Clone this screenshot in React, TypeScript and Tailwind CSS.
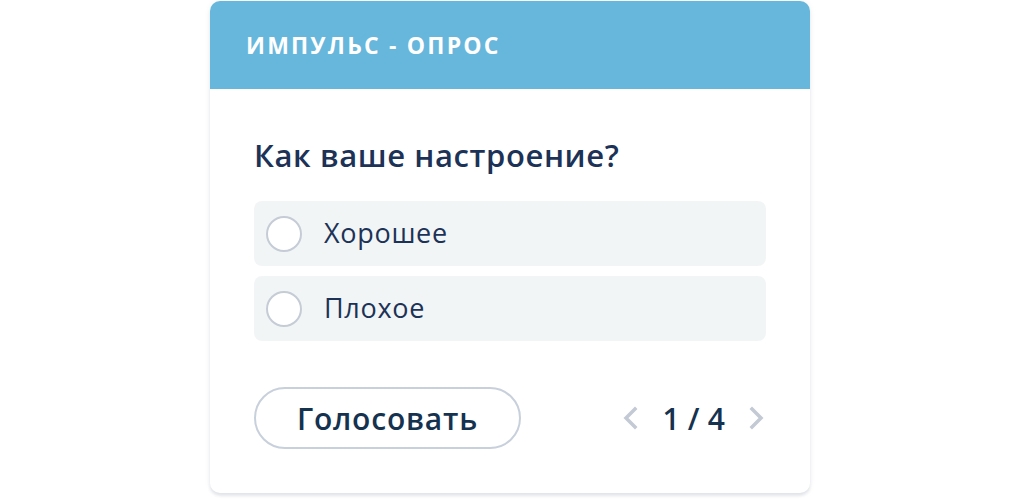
import { useState } from 'react';

const options = ['Хорошее', 'Плохое'];

export default function App() {
  const [selected, setSelected] = useState<number | null>(null);

  return (
    <div className="w-[1020px] h-[499px] bg-white font-['Open_Sans',sans-serif] overflow-hidden">
      <div className="ml-[210px] mt-[1px] w-[600px] h-[492px] bg-white rounded-[10px] overflow-hidden shadow-[0_3px_3px_rgba(30,45,80,0.10),0_0_6px_rgba(30,45,80,0.06)] flex flex-col">
        {/* шапка */}
        <div className="h-[88px] bg-[#67b6dc] flex items-center px-9">
          <span className="text-[23px] font-bold text-white tracking-[2.2px] uppercase">Импульс - опрос</span>
        </div>

        <div className="px-11 pt-[46px]">
          <h2 className="text-[31px] leading-[40px] font-semibold tracking-[0.6px] text-[#1c3256]">Как ваше настроение?</h2>

          <ul className="mt-[26px] space-y-[10px]">
            {options.map((o, i) => (
              <li key={o}>
                <button
                  type="button"
                  onClick={() => setSelected(i)}
                  className="w-full h-[65px] rounded-[8px] bg-[#f2f5f6] flex items-center px-[12px] gap-[22px] text-left"
                >
                  <span className="w-[36px] h-[36px] rounded-full border-2 border-[#c5ccd6] bg-white flex items-center justify-center">
                    {selected === i && <span className="w-[18px] h-[18px] rounded-full bg-[#67b6dc]" />}
                  </span>
                  <span className="text-[27px] tracking-[0.7px] text-[#1c3256]">{o}</span>
                </button>
              </li>
            ))}
          </ul>

          <div className="mt-[46px] flex items-center justify-between">
            <button type="button" className="w-[267px] h-[62px] rounded-full border-2 border-[#c8d0db] text-[30px] font-semibold tracking-[0.8px] text-[#15324f]">
              Голосовать
            </button>
            <div className="flex items-center gap-[23px] text-[30px] font-semibold tracking-[0.2px] text-[#15324f]">
              <svg width="18" height="24" viewBox="0 0 18 24" fill="none" stroke="#c3cad4" strokeWidth="3.5" strokeLinecap="square">
                <path d="M14 3 L5 12 L14 21" />
              </svg>
              <span>1 / 4</span>
              <svg width="18" height="24" viewBox="0 0 18 24" fill="none" stroke="#c3cad4" strokeWidth="3.5" strokeLinecap="square">
                <path d="M4 3 L13 12 L4 21" />
              </svg>
            </div>
          </div>
        </div>
      </div>
    </div>
  );
}
